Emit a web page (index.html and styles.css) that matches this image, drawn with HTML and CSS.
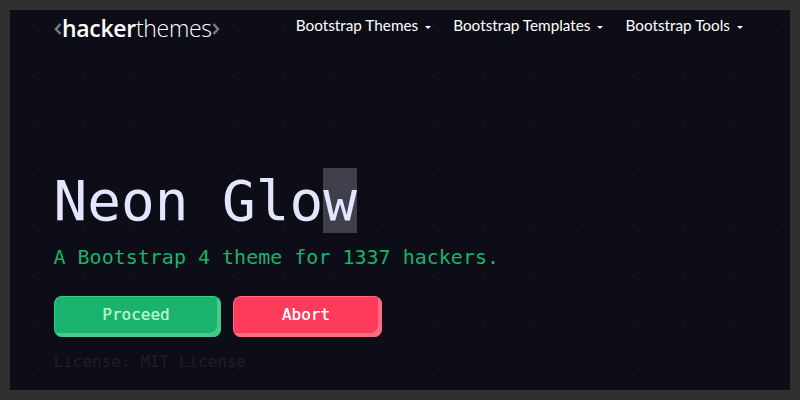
FILE: index.html
```html
<!DOCTYPE html>
<html lang="en">
<head>
<meta charset="utf-8">
<title>Neon Glow</title>
<link rel="stylesheet" href="styles.css">
</head>
<body>
<div class="frame">
  <header class="topbar">
    <a class="logo" href="#">
      <svg class="chev" width="8" height="15" viewBox="0 0 8 15"><path d="M6.500 3 2 8 6.500 13" fill="none" stroke="#77777d" stroke-width="2.600"/></svg>
      <b>hacker</b><span>themes</span>
      <svg class="chev" width="8" height="15" viewBox="0 0 8 15"><path d="M1.500 3 6 8 1.500 13" fill="none" stroke="#77777d" stroke-width="2.600"/></svg>
    </a>
    <nav class="nav">
      <a href="#">Bootstrap Themes<i class="caret"></i></a>
      <a href="#">Bootstrap Templates<i class="caret"></i></a>
      <a href="#">Bootstrap Tools<i class="caret"></i></a>
    </nav>
  </header>
  <main class="hero">
    <h1 class="title">Neon Glo<span class="cursor">w</span></h1>
    <p class="lead">A Bootstrap 4 theme for 1337 hackers.</p>
    <div class="actions">
      <a class="btn btn-green" href="#">Proceed</a>
      <a class="btn btn-red" href="#">Abort</a>
    </div>
    <p class="license">License: MIT License</p>
  </main>
</div>
</body>
</html>
```
FILE: styles.css
```css
html, body { margin: 0; height: 100%; }
body { background: #303030; font-family: "DejaVu Sans Mono", monospace; }
.frame {
  box-sizing: border-box;
  width: 780px;
  height: 380px;
  margin: 10px;
  padding: 0 44px;
  overflow: hidden;
  background-color: #0c0d17;
  background-image: radial-gradient(circle at 23.5px 15.5px, #161722 0, #161722 1px, transparent 1.2px);
  background-size: 50px 50px;
}
.topbar { display: flex; height: 36px; align-items: center; }
.logo { display: flex; align-items: center; font-family: "Open Sans", sans-serif; font-size: 23px; letter-spacing: -0.3px; color: #fff; text-decoration: none; }
.logo b { font-weight: 600; }
.logo span { font-weight: 300; }
.chev { flex: none; }
.nav { display: flex; gap: 22px; margin: 0 0 6px 76px; }
.nav a { font-family: "Lato", sans-serif; font-size: 15.3px; color: #fff; text-decoration: none; }
.caret { display: inline-block; margin-left: 7px; vertical-align: 2px; border-top: 3px solid #fff; border-left: 3px solid transparent; border-right: 3px solid transparent; }
.hero { padding-top: 122px; }
.title { margin: 0 0 0 -0.5px; font-size: 56px; line-height: 65px; font-weight: 400; color: #e6e5ff; }
.cursor { background: #40404c; }
.lead { margin: 9px 0 0 -0.5px; font-size: 20px; line-height: 30px; color: #18b36b; }
.actions { display: flex; gap: 12px; margin-top: 24px; }
.btn { box-sizing: border-box; height: 41px; padding: 0 4px 5px 0; display: flex; align-items: center; justify-content: center; border-radius: 8px; font-size: 16px; text-decoration: none; text-shadow: 0 0 0.6px currentColor; }
.btn-green { width: 167px; background: #19b36d; color: #b6f5c8; border-top: 1px solid #3fc98a; border-left: 1px solid #3fc98a; box-shadow: inset -4px -4px 0 #45c98d; }
.btn-red { width: 149px; background: #ff3b5c; color: #fff; border-top: 1px solid #ff6b82; border-left: 1px solid #ff6b82; box-shadow: inset -4px -4px 0 #ff6b80; }
.license { margin: 13px 0 0 -0.5px; font-size: 16px; line-height: 24px; color: #1e1f2c; }
```
